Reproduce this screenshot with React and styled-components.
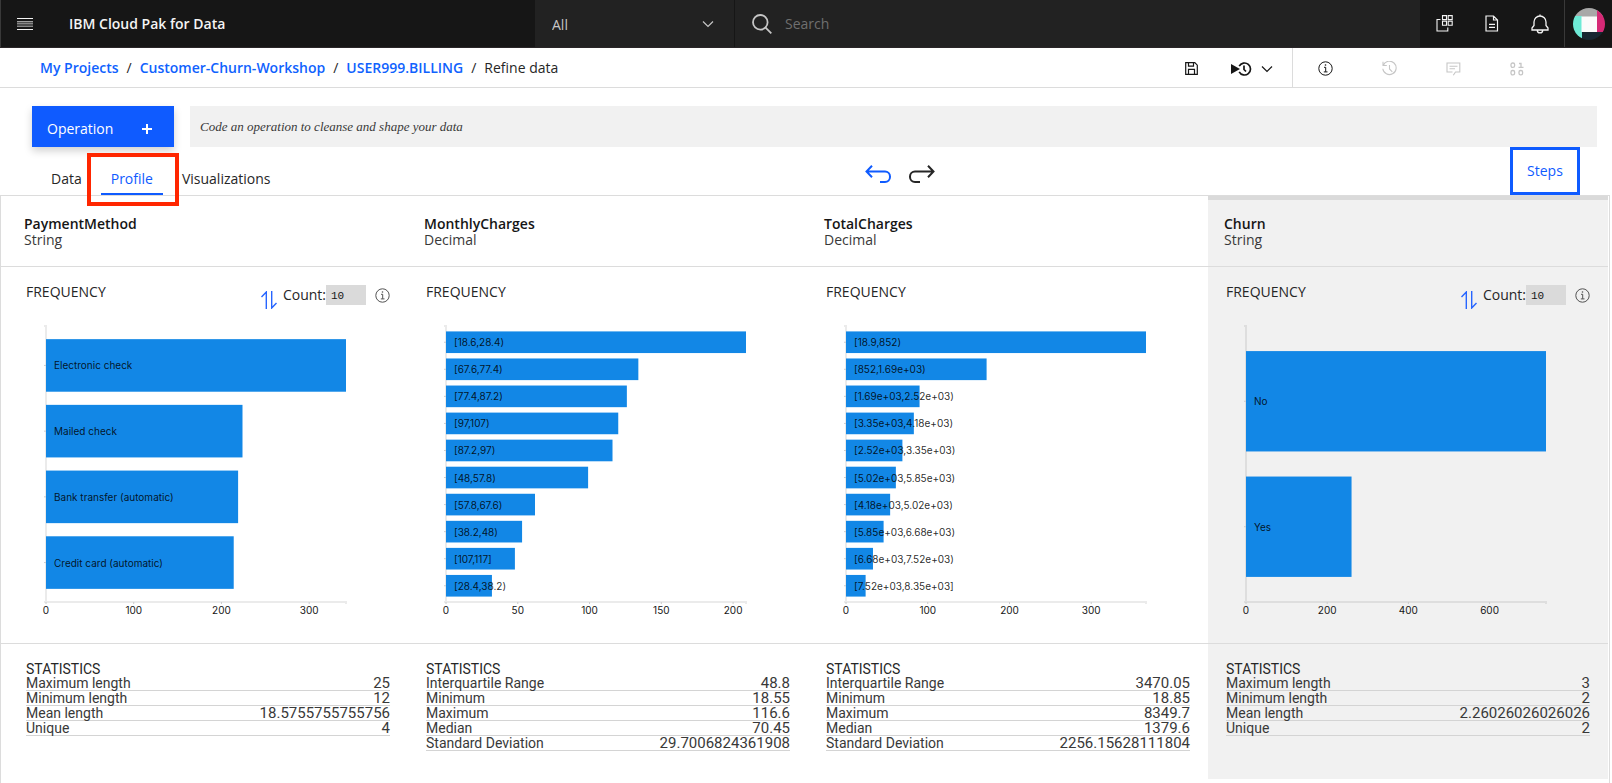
import React from "react";
import styled, { createGlobalStyle, css } from "styled-components";

const GlobalStyle = createGlobalStyle`
  *, *::before, *::after { box-sizing: border-box; }
  body {
    margin: 0;
    background: #fff;
    color: #262626;
    font: 400 14px/16px "Open Sans", "Liberation Sans", sans-serif;
  }
  button, input, select {
    margin: 0;
    padding: 0;
    border: 0;
    border-radius: 0;
    background: none;
    color: inherit;
    font: inherit;
  }
  button { cursor: pointer; }
  svg { display: block; flex: none; }
  h1, h2, h3, p { margin: 0; font-size: 14px; font-weight: 400; }
`;

/* ---------- Top bar ---------- */

const TopBar = styled.header`
  display: flex;
  height: 48px;
  background: #161616;
  color: #f4f4f4;
  border-bottom: 1px solid #2a2628;
`;

const Brand = styled.div`
  display: flex;
  align-items: center;
  flex: 0 1 535px;
  border-left: 1px solid #393939;
`;

const BrandName = styled.h1`
  && { font-weight: 600; }
  margin-left: 20px;
  white-space: nowrap;
`;

const BarButton = styled.button`
  display: flex;
  align-items: center;
  justify-content: center;
  width: 48px;
  height: 47px;
  ${(p) => p.$divided && css`border-left: 1px solid #393939;`}
`;

const ScopeBox = styled.div`
  display: grid;
  grid-template-columns: 1fr 32px;
  align-items: center;
  flex: 0 0 200px;
  background: #222;
  border-right: 1px solid #161616;
  color: #c6c6c6;

  svg { grid-area: 1 / 2; pointer-events: none; }
`;

const ScopeSelect = styled.select`
  grid-area: 1 / 1 / 2 / 3;
  height: 47px;
  && { padding: 2px 17px 0; }
  appearance: none;
`;

const SearchBox = styled.label`
  display: flex;
  align-items: center;
  flex: 1;
  gap: 13px;
  padding-left: 17px;
  background: #222;
  color: #c6c6c6;
`;

const SearchInput = styled.input`
  flex: 1;
  min-width: 0;
  height: 47px;
  &::placeholder { color: #6f6f6f; opacity: 1; }
`;

const BarActions = styled.nav`
  display: flex;
  flex: none;
`;

/* ---------- Breadcrumb bar ---------- */

const CrumbBar = styled.div`
  display: flex;
  justify-content: space-between;
  height: 40px;
  border-bottom: 1px solid #dcdcdc;
`;

const Crumbs = styled.nav`
  display: flex;
  align-items: center;
  gap: 8px;
  padding-left: 40px;
  white-space: nowrap;
`;

const CrumbLink = styled.a`
  color: #0f62fe;
  font-weight: 600;
  text-decoration: none;
`;

const CrumbTools = styled.div`
  display: flex;
  flex: none;
`;

const ToolButton = styled.button`
  display: flex;
  align-items: center;
  justify-content: center;
  width: ${(p) => p.$width || 64}px;
  && { padding-top: 2px; }
  color: ${(p) => (p.disabled ? "#c6c6c6" : "#161616")};
`;

const InfoTools = styled.div`
  display: flex;
  margin-left: 19px;
  padding-right: 63px;
  border-left: 1px solid #dcdcdc;
`;

/* ---------- Operation and tabs ---------- */

const OperationRow = styled.form`
  display: flex;
  gap: 16px;
  padding: 18px 15px 0 32px;
`;

const OperationButton = styled.button`
  display: flex;
  align-items: center;
  justify-content: space-between;
  flex: 0 0 142px;
  height: 41px;
  && { padding: 4px 21px 0 15px; }
  background: #0f5bff;
  color: #fff;
  box-shadow: 0 4px 8px rgba(0, 0, 0, 0.18);
`;

const CodeInput = styled.input`
  flex: 1;
  min-width: 0;
  height: 41px;
  && { padding: 0 10px; }
  background: #f1f1f1;
  font: italic 13px/16px "Liberation Serif", serif;
  &::placeholder { color: #393939; opacity: 1; }
`;

const TabRow = styled.div`
  display: flex;
  justify-content: space-between;
  height: 48px;
  padding: 0 32px 0 51px;
`;

const Tabs = styled.div`
  display: flex;
  align-items: flex-end;
  gap: 19px;
`;

const Tab = styled.button`
  position: relative;
  height: 24px;
  padding: 0 0 6px;
  border-bottom: 2px solid transparent;
  ${(p) =>
    p.$active &&
    css`
      && { padding: 0 10px 6px; }
      border-color: #0f5bff;
      color: #0f5bff;

      &::after {
        content: "";
        position: absolute;
        inset: -18px -16px -13px -14px;
        border: 4px solid #ff2600;
        pointer-events: none;
        z-index: 1;
      }
    `}
`;

const HistoryTools = styled.div`
  display: flex;
  align-items: center;
  gap: 18px;
  padding: 5px 0 0 20px;
`;

const PlainButton = styled.button`
  display: block;
  color: ${(p) => p.$color};
`;

const StepsButton = styled.button`
  width: 70px;
  border: 3px solid #0f5bff;
  color: #0f5bff;
`;

/* ---------- Profile panel ---------- */

const Panel = styled.main`
  margin-right: 2px;
  padding-bottom: 4px;
  border: solid #dcdcdc;
  border-width: 1px 1px 0 1px;
`;

const PanelRow = styled.section`
  display: grid;
  grid-template-columns: repeat(4, 1fr);
  margin-right: 1px;
  padding-left: 7px;
  ${(p) => !p.$last && css`border-bottom: 1px solid #dcdcdc;`}
`;

const shade = css`
  background: ${(p) => (p.$selected ? "#f1f1f1" : "transparent")};
`;

const HeadCell = styled.div`
  ${shade}
  padding: 20px 16px 18px;
  ${(p) => p.$selected && css`box-shadow: inset 0 4px #dadada;`}
`;

const ColumnName = styled.h2`
  && { font-weight: 600; }
  color: #161616;
`;

const ColumnType = styled.p`
  color: #393939;
`;

const ChartCell = styled.div`
  ${shade}
  padding: 18px 18px 17px;
`;

const ChartHead = styled.div`
  display: flex;
  justify-content: space-between;
  height: 20px;
  margin-bottom: 11px;
`;

const SectionTitle = styled.h3`
  line-height: 14px;
`;

const CountTools = styled.div`
  display: flex;
  align-items: center;
`;

const SortButton = styled.button`
  align-self: flex-start;
  && { padding: 6px 6px 0 0; }
`;

const CountInput = styled.input`
  width: 40px;
  height: 20px;
  && { margin-right: 9px; padding: 2px 5px 0; }
  background: #dadada;
  color: #161616;
  font: 11px/16px "Liberation Mono", monospace;
`;

const ChartSvg = styled.svg`
  overflow: visible;
  font: 400 10px Inter, sans-serif;
`;

const StatsCell = styled.div`
  ${shade}
  padding: 18px 18px 28px;
  font-family: Roboto, "Liberation Sans", sans-serif;
`;

const StatsTable = styled.table`
  width: 100%;
  border-collapse: collapse;
  line-height: 14px;
  color: #393939;

  tr { border-bottom: 1px solid #d4d4d4; }
  th, td { padding: 0; font-weight: 400; }
  th { text-align: left; }
  td { text-align: right; font-size: 15px; }
`;

/* ---------- Icons ---------- */

const Icon = ({ w = 16, h = w, box, sw = 1, children, ...rest }) => (
  <svg width={w} height={h} viewBox={box || `0 0 ${w} ${h}`} fill="none" stroke="currentColor" strokeWidth={sw} aria-hidden="true" {...rest}>
    {children}
  </svg>
);

const MenuIcon = () => (
  <Icon w={16} h={12} sw={1}>
    <path d="M0 .5h16M0 11.5h16" />
    <path d="M0 3.500h16M0 5.5h16M0 8.5h16M0 7h16M0 4h16" opacity=".5" />
  </Icon>
);

const ChevronIcon = () => (
  <Icon w={12} h={12} sw={1.2}><path d="M1 3.5l5 5 5-5" /></Icon>
);

const SearchIcon = () => (
  <Icon w={20} sw={1.8}><circle cx="8.3" cy="8.3" r="7.3" /><path d="M13.3 13.3l6 6" /></Icon>
);

const AppsIcon = () => (
  <Icon w={17} h={17} sw={1.1}>
    <path d="M6.5.6h4v4h-4zM12.2.6h4v4h-4zM6.5 6.3h4v4h-4zM12.2 6.3h4v4h-4zM4.5 4.5H1v11.5h10.8v-3.5" />
  </Icon>
);

const DocIcon = () => (
  <Icon w={14} h={17} sw={1.2}>
    <path d="M8.5 1H1v15h11.5V5zM8.5 1v4h4M4 9.3h6M4 12.4h6" />
  </Icon>
);

const BellIcon = () => (
  <Icon w={18} h={20} sw={1.3}>
    <path d="M9 .5v2M1 16v-2l2-2.5V8a6 6 0 0 1 12 0v3.5l2 2.5v2zM6.3 16.2a2.7 2.7 0 0 0 5.4 0" />
  </Icon>
);

const Avatar = () => (
  <svg width="32" height="32" viewBox="0 0 32 32" aria-hidden="true">
    <clipPath id="avatar"><circle cx="16" cy="16" r="16" /></clipPath>
    <g clipPath="url(#avatar)">
      <path fill="#a8a8a8" d="M0 0h32v9H0z" />
      <path fill="#6eead6" d="M0 8h9v24H0z" />
      <path fill="#182631" d="M9 23h23v9H9z" />
      <path fill="#d62976" d="M24 0h8v24h-8z" />
      <path fill="#fbfbfb" d="M8.500 8.500h15.500v15.500H8.500z" />
    </g>
  </svg>
);

const SaveIcon = () => (
  <Icon w={13} sw={1.2}>
    <path d="M.7.7h9.100l2.500 2.500v9.100H.7zM3.500.7v3.500h5V.7M3.500 12.300V7.300h6v5" />
  </Icon>
);

const RunIcon = () => (
  <Icon w={22} h={14} sw={1.7}>
    <path d="M1 2l9 5-9 5z" fill="currentColor" stroke="none" />
    <path d="M9.200 4.200a6 6 0 1 1 0 5.600M14 3.500v4l2 2" />
  </Icon>
);

const InfoIcon = () => (
  <Icon w={15}>
    <circle cx="7.500" cy="7.500" r="6.700" />
    <path d="M6 6.300h1.700v4.500M5.800 10.900h3.700" />
    <circle cx="7.500" cy="4" r=".8" fill="currentColor" stroke="none" />
  </Icon>
);

const HistoryIcon = () => (
  <Icon w={15} sw={1.1}>
    <path d="M1.300 4.200a6.700 6.700 0 1 1-.5 3.600M1 .7v3.800h3.800M7.500 4v4l2.800 2.800" />
  </Icon>
);

const CommentIcon = () => (
  <Icon w={15} h={14} sw={1.1}>
    <path d="M7.300 13.300l2.200-3.300h4.300V1H1v9h5.500M3.500 4.200h8M3.500 6.800h5.500" />
  </Icon>
);

const DataIcon = () => (
  <Icon w={14} sw={1.3}>
    <rect x="1" y="1" width="3.600" height="4.400" rx="1.600" />
    <rect x="1" y="8.500" width="3.600" height="4.400" rx="1.600" />
    <rect x="9" y="8.500" width="3.600" height="4.400" rx="1.600" />
    <path d="M9 1.500h2v4M8.500 5.400h5" />
  </Icon>
);

const PlusIcon = () => (
  <Icon w={12} sw={2}><path d="M6 1v10M1 6h10" /></Icon>
);

const UndoIcon = ({ flip }) => (
  <Icon w={26} h={18} sw={2}>
    <g transform={flip ? "translate(26 0) scale(-1 1)" : undefined}>
      <path d="M7 .7L1.500 6.500 7 12.300M1.500 6.500H20a5 5 0 0 1 5 5v.5a5 5 0 0 1-5 5h-5" />
    </g>
  </Icon>
);

const SortIcon = () => (
  <Icon w={16} h={18} sw={1.400}>
    <path d="M.5 6L5.300 1v17M10.700 0v17l4.800-5" stroke="#2765ff" />
  </Icon>
);

/* ---------- Chart ---------- */

const AXIS = { x: 20, top: 10, width: 300, height: 276 };

function BarChart({ name, bars, tick }) {
  const max = Math.max(...bars.map(([, v]) => v));
  const step = AXIS.height / (bars.length + 0.2);
  const scale = (v) => AXIS.x + (v / max) * AXIS.width;
  const bottom = AXIS.top + AXIS.height;
  const ticks = [];
  for (let v = 0; v <= max; v += tick) ticks.push(v);
  return (
    <ChartSvg width="340" height="310" role="img" aria-label={`Frequency of ${name}`}>
      <path
        d={`M${AXIS.x - 2} ${AXIS.top}h2v${AXIS.height}h${AXIS.width}v2M${AXIS.x} ${bottom}h-2`}
        fill="none" stroke="#000" strokeOpacity=".08" strokeWidth="2"
      />
      {bars.map(([label, value], i) => {
        const y = AXIS.top + step * (i + 0.2);
        const mid = y + step * 0.4;
        return (
          <g key={label}>
            <path d={`M${AXIS.x - 2} ${mid}h2`} stroke="#ccc" />
            <rect x={AXIS.x} y={y} width={scale(value) - AXIS.x} height={step * 0.8} fill="#1287e6" />
            <text x={AXIS.x + 8} y={mid + 4} fill="#000" fillOpacity=".85">{label}</text>
          </g>
        );
      })}
      {ticks.map((v) => (
        <g key={v}>
          <path d={`M${scale(v)} ${bottom}v2`} stroke="#ccc" />
          <text x={scale(v)} y={bottom + 12} textAnchor="middle" fill="#161616">{v}</text>
        </g>
      ))}
    </ChartSvg>
  );
}

/* ---------- Data ---------- */

const columns = [
  {
    name: "PaymentMethod", type: "String", tick: 100,
    bars: [["Electronic check", 342], ["Mailed check", 224], ["Bank transfer (automatic)", 219], ["Credit card (automatic)", 214]],
    stats: [["Maximum length", "25"], ["Minimum length", "12"], ["Mean length", "18.5755755755756"], ["Unique", "4"]],
  },
  {
    name: "MonthlyCharges", type: "Decimal", tick: 50,
    bars: [["[18.6,28.4)", 209], ["[67.6,77.4)", 134], ["[77.4,87.2)", 126], ["[97,107)", 120], ["[87.2,97)", 116], ["[48,57.8)", 99], ["[57.8,67.6)", 62], ["[38.2,48)", 53], ["[107,117]", 48], ["[28.4,38.2)", 32]],
    stats: [["Interquartile Range", "48.8"], ["Minimum", "18.55"], ["Maximum", "116.6"], ["Median", "70.45"], ["Standard Deviation", "29.7006824361908"]],
  },
  {
    name: "TotalCharges", type: "Decimal", tick: 100,
    bars: [["[18.9,852)", 367], ["[852,1.69e+03)", 172], ["[1.69e+03,2.52e+03)", 90], ["[3.35e+03,4.18e+03)", 83], ["[2.52e+03,3.35e+03)", 69], ["[5.02e+03,5.85e+03)", 61], ["[4.18e+03,5.02e+03)", 54], ["[5.85e+03,6.68e+03)", 46], ["[6.68e+03,7.52e+03)", 33], ["[7.52e+03,8.35e+03]", 24]],
    stats: [["Interquartile Range", "3470.05"], ["Minimum", "18.85"], ["Maximum", "8349.7"], ["Median", "1379.6"], ["Standard Deviation", "2256.15628111804"]],
  },
  {
    name: "Churn", type: "String", tick: 200, selected: true,
    bars: [["No", 739], ["Yes", 260]],
    stats: [["Maximum length", "3"], ["Minimum length", "2"], ["Mean length", "2.26026026026026"], ["Unique", "2"]],
  },
];

const crumbs = ["My Projects", "Customer-Churn-Workshop", "USER999.BILLING"];

export default function App() {
  return (
    <>
      <GlobalStyle />
      <TopBar>
        <Brand>
          <BarButton aria-label="Menu"><MenuIcon /></BarButton>
          <BrandName>IBM Cloud Pak for Data</BrandName>
        </Brand>
        <ScopeBox>
          <ScopeSelect aria-label="Search scope"><option>All</option></ScopeSelect>
          <ChevronIcon />
        </ScopeBox>
        <SearchBox>
          <SearchIcon />
          <SearchInput aria-label="Search" placeholder="Search" />
        </SearchBox>
        <BarActions aria-label="Account">
          <BarButton aria-label="Apps"><AppsIcon /></BarButton>
          <BarButton aria-label="Documents"><DocIcon /></BarButton>
          <BarButton aria-label="Notifications"><BellIcon /></BarButton>
          <BarButton aria-label="Profile menu" $divided><Avatar /></BarButton>
        </BarActions>
      </TopBar>

      <CrumbBar>
        <Crumbs aria-label="Breadcrumb">
          {crumbs.map((c) => (
            <React.Fragment key={c}>
              <CrumbLink href="#">{c}</CrumbLink>
              <span>/</span>
            </React.Fragment>
          ))}
          <span>Refine data</span>
        </Crumbs>
        <CrumbTools>
          <ToolButton $width={60} aria-label="Save"><SaveIcon /></ToolButton>
          <ToolButton $width={40} aria-label="Save and create a job"><RunIcon /></ToolButton>
          <ToolButton $width={12} aria-label="More run options"><ChevronIcon /></ToolButton>
          <InfoTools>
            <ToolButton aria-label="Information"><InfoIcon /></ToolButton>
            <ToolButton aria-label="History" disabled><HistoryIcon /></ToolButton>
            <ToolButton aria-label="Comments" disabled><CommentIcon /></ToolButton>
            <ToolButton aria-label="Data" disabled><DataIcon /></ToolButton>
          </InfoTools>
        </CrumbTools>
      </CrumbBar>

      <OperationRow>
        <OperationButton type="button">Operation<PlusIcon /></OperationButton>
        <CodeInput aria-label="Operation code" placeholder="Code an operation to cleanse and shape your data" />
      </OperationRow>

      <TabRow>
        <Tabs role="tablist">
          <Tab role="tab">Data</Tab>
          <Tab role="tab" aria-selected="true" $active>Profile</Tab>
          <Tab role="tab">Visualizations</Tab>
        </Tabs>
        <HistoryTools>
          <PlainButton $color="#0f5bff" aria-label="Undo"><UndoIcon /></PlainButton>
          <PlainButton $color="#262626" aria-label="Redo"><UndoIcon flip /></PlainButton>
        </HistoryTools>
        <StepsButton>Steps</StepsButton>
      </TabRow>

      <Panel>
        <PanelRow>
          {columns.map((c) => (
            <HeadCell key={c.name} $selected={c.selected}>
              <ColumnName>{c.name}</ColumnName>
              <ColumnType>{c.type}</ColumnType>
            </HeadCell>
          ))}
        </PanelRow>
        <PanelRow>
          {columns.map((c) => (
            <ChartCell key={c.name} $selected={c.selected}>
              <ChartHead>
                <SectionTitle>FREQUENCY</SectionTitle>
                {c.type === "String" && (
                  <CountTools>
                    <SortButton aria-label="Change sort order"><SortIcon /></SortButton>
                    <label htmlFor={`count-${c.name}`}>Count:</label>
                    <CountInput id={`count-${c.name}`} defaultValue="10" />
                    <PlainButton $color="#525252" aria-label="About count"><InfoIcon /></PlainButton>
                  </CountTools>
                )}
              </ChartHead>
              <BarChart name={c.name} bars={c.bars} tick={c.tick} />
            </ChartCell>
          ))}
        </PanelRow>
        <PanelRow $last>
          {columns.map((c) => (
            <StatsCell key={c.name} $selected={c.selected}>
              <SectionTitle>STATISTICS</SectionTitle>
              <StatsTable>
                <tbody>
                  {c.stats.map(([label, value]) => (
                    <tr key={label}>
                      <th scope="row">{label}</th>
                      <td>{value}</td>
                    </tr>
                  ))}
                </tbody>
              </StatsTable>
            </StatsCell>
          ))}
        </PanelRow>
      </Panel>
    </>
  );
}
